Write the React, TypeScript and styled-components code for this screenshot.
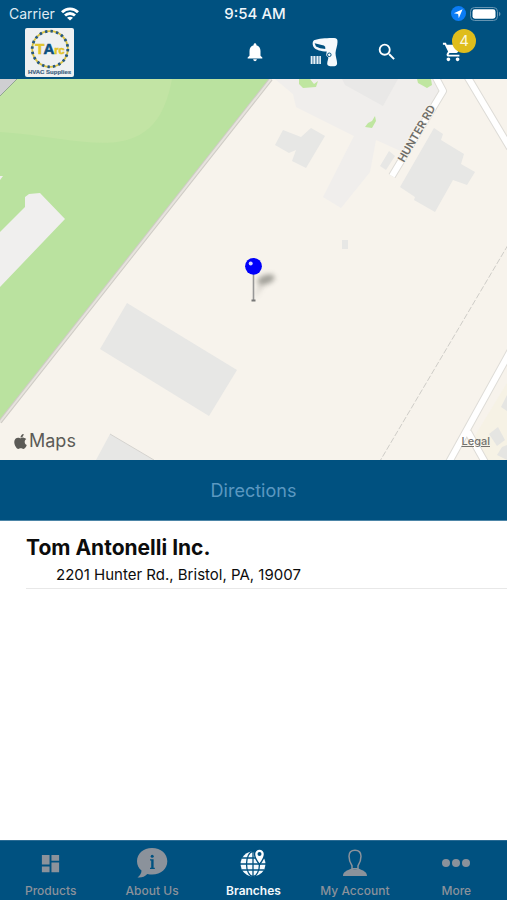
import React from "react";
import styled, { createGlobalStyle } from "styled-components";
import { MdDashboard, MdNotifications, MdSearch, MdShoppingCart } from "react-icons/md";
import { FaApple } from "react-icons/fa";

const blue = "#005180";
const muted = "#8b929b";

const GlobalStyle = createGlobalStyle`
  *, *::before, *::after { box-sizing: border-box; }
  body { margin: 0; background: #fff; font-family: Inter, "Liberation Sans", sans-serif; color: #0c0c0c; }
  button { font: inherit; color: inherit; border: 0; padding: 0; background: none; cursor: pointer; }
  svg { display: block; }
`;

const Screen = styled.div`
  display: flex;
  flex-direction: column;
  min-height: 100vh;
`;

const Header = styled.header`
  background: ${blue};
  color: #fff;
`;

const StatusBar = styled.div`
  display: grid;
  grid-template-columns: 1fr auto 1fr;
  align-items: center;
  height: 27px;
  padding: 0 6px 0 9px;
`;

const StatusGroup = styled.div<{ $end?: boolean }>`
  display: flex;
  align-items: center;
  gap: ${(p) => (p.$end ? 4 : 6)}px;
  justify-content: ${(p) => (p.$end ? "flex-end" : "flex-start")};
  font-size: 14px;
  color: #dfeaf2;
`;

const Clock = styled.time`
  font-size: 15px;
  font-weight: 500;
  color: #f0f6fa;
`;

const TopNav = styled.nav`
  display: flex;
  align-items: flex-start;
  justify-content: space-between;
  height: 52px;
  padding: 0 21px 0 25px;
`;

const Actions = styled.div`
  display: flex;
`;

const ActionButton = styled.button`
  position: relative;
  display: flex;
  align-items: center;
  justify-content: center;
  width: 66px;
  height: 50px;
`;

const Badge = styled.span`
  position: absolute;
  top: 2px;
  right: 10px;
  width: 24px;
  height: 24px;
  border-radius: 50%;
  background: #dfbd1c;
  color: #fbf6dc;
  font-size: 15px;
  line-height: 24px;
  text-align: center;
`;

const MapPanel = styled.section`
  position: relative;
  height: 381px;
  background: #f7f3ec;
  overflow: hidden;
`;

const MapDrawing = styled.svg`
  width: 100%;
  height: 100%;
`;

const MapBrand = styled.div`
  position: absolute;
  left: 12px;
  bottom: 7px;
  display: flex;
  align-items: center;
  color: #5c5b57;
  font-size: 18px;
  line-height: 24px;
`;

const LegalLink = styled.a`
  position: absolute;
  right: 17px;
  bottom: 11px;
  color: #73726e;
  font-size: 11px;
  font-weight: 500;
  line-height: 16px;
`;

const DirectionsButton = styled.button`
  height: 61px;
  && {
    background: ${blue};
    color: #5b98c0;
    font-size: 18px;
    border-bottom: 1px solid #4c85a7;
  }
`;

const BranchList = styled.ul`
  flex: 1;
  margin: 0;
  padding: 0 0 0 26px;
  list-style: none;
`;

const Branch = styled.li`
  display: grid;
  gap: 2px;
  padding: 13px 0 2px;
  border-bottom: 1px solid #e8e8e8;
`;

const BranchName = styled.h2`
  margin: 0;
  font-size: 21px;
  line-height: 28px;
  font-weight: 700;
`;

const BranchAddress = styled.address`
  padding-left: 30px;
  font-size: 15px;
  font-style: normal;
  line-height: 22px;
`;

const TabBar = styled.nav`
  display: grid;
  grid-template-columns: repeat(5, 1fr);
  height: 60px;
  background: ${blue};
  border-top: 1px solid #2a6b94;
`;

const Tab = styled.button<{ $active?: boolean }>`
  display: grid;
  grid-template-rows: 36px 14px;
  gap: 3px;
  align-content: start;
  justify-items: center;
  align-items: center;
  && {
    padding-top: 4px;
    color: ${(p) => (p.$active ? "#f2f8fc" : muted)};
    font-size: 12px;
    line-height: 14px;
    font-weight: ${(p) => (p.$active ? 600 : 500)};
  }
`;

function WifiIcon() {
  return (
    <svg width="18" height="14" viewBox="0 0 18 14" fill="none" stroke="#fff" strokeWidth="2.8">
      <path d="M1 5.200C5.400 .7 12.600 .7 17 5.200" />
      <path d="M4 8.600c2.800-2.800 7.200-2.800 10 0" />
      <path d="M9 13.600 6 10.800c1.800-1.500 4.200-1.500 6 0Z" fill="#fff" stroke="none" />
    </svg>
  );
}

function LocationIcon() {
  return (
    <svg width="15" height="15" viewBox="0 0 15 15">
      <circle cx="7.5" cy="7.5" r="7.5" fill="#0b7cf5" />
      <path d="M11.6 3.3 2.9 7.2l4.2.8.7 4.2Z" fill="#fff" />
    </svg>
  );
}

function BatteryIcon() {
  return (
    <svg width="31" height="14" viewBox="0 0 31 14">
      <rect x=".5" y=".5" width="27" height="13" rx="4" fill="none" stroke="#6695b2" />
      <rect x="2.5" y="2.3" width="23" height="9.4" rx="2.4" fill="#fff" />
      <path d="M29 4.8c2 .8 2 3.6 0 4.4Z" fill="#6695b2" />
    </svg>
  );
}

function Logo() {
  return (
    <svg width="49" height="50" viewBox="0 0 49 50" role="img" aria-label="TAIC HVAC Supplies">
      <rect y="1" width="49" height="49" rx="2" fill="#eef0f1" />
      <circle cx="25" cy="22" r="17.800" fill="none" stroke="#d9c243" strokeWidth="1.800" />
      <circle cx="25" cy="22" r="17.800" fill="none" stroke="#27587f" strokeWidth="2.800" strokeDasharray="2.400 3.190" />
      <g fontFamily="Liberation Sans, sans-serif" fontWeight="700" textAnchor="middle">
        <text x="25" y="27" fontSize="15" fill="#e2c42b" stroke="#e2c42b" strokeWidth=".6">
          T
          <tspan fill="#0b4f80" stroke="#0b4f80">A</tspan>
          <tspan fontSize="11">rc</tspan>
        </text>
        <text x="24.500" y="47" fontSize="6" fill="#3c6181" stroke="#3c6181" strokeWidth=".2">HVAC Supplies</text>
      </g>
    </svg>
  );
}

function ScannerIcon() {
  return (
    <svg width="34" height="32" viewBox="0 0 34 32">
      <path
        d="M10 4.200C15 2.400 24 1.800 30 2c2.600 0 3.700 1 3.500 4 0 4-1.700 7-2 11 0 4 1.700 7 1.600 10.500 0 2-1.600 2.800-4.600 2.800-3.500 0-5.300-.6-5.300-2.600 0-2.700 1.500-4.700 1-6.700-1.700-.2-2.400-1.800-1.700-4l.2-1.400C17 15.400 12 14 10 11.500 8.500 9.500 8 5.600 10 4.200Z"
        fill="#f5f9fc"
      />
      <path d="M10.600 7.200 19.800 9.600Q21.800 10.400 21.300 13 15.500 12.800 12 10.600Z" fill={blue} />
      <circle cx="25.300" cy="18.800" r="1.800" fill="none" stroke={blue} />
      <path d="M6.700 20h10v8h-10Z" fill="#6d9ab7" />
      <path d="M7.500 20v8M10.300 20v8M13.500 20v8M16.200 20v8" stroke="#eaf2f7" strokeWidth="1.400" />
    </svg>
  );
}

function AboutIcon() {
  return (
    <svg width="32" height="32" viewBox="0 0 32 32">
      <path d="M16 1C7.200 1 1 6.700 1 14.200c0 4 1.700 7 4.500 9.200 0 2.800-1.500 5-4 7 4 .5 7.300-.8 9.800-3.500 11.300 2.400 20-3.600 20-12.700C31.300 6.700 25 1 16 1Z" fill={muted} />
      <circle cx="16.200" cy="9.300" r="1.500" fill={blue} />
      <path d="M14 12.300h3.600v8.500h1.200v1.200H14v-1.200h1.200v-7.300H14Z" fill={blue} />
    </svg>
  );
}

function BranchesIcon() {
  return (
    <svg width="26" height="30" viewBox="0 0 26 30">
      <circle cx="13" cy="16" r="12.400" fill="#f5fafd" />
      <g fill="none" stroke={blue} strokeWidth="1.300">
        <path d="M13 3v26M0 16h26M2 10h22M2 22h22" />
        <ellipse cx="13" cy="16" rx="6.500" ry="12.400" />
      </g>
      <path d="M19.500 1a5 5 0 0 0-5 5C14.500 10 19.500 16.500 19.500 16.500S24.500 10 24.500 6A5 5 0 0 0 19.500 1Z" fill="#fff" stroke={blue} strokeWidth="1.400" />
      <circle cx="19.500" cy="6" r="2" fill={blue} />
    </svg>
  );
}

function AccountIcon() {
  return (
    <svg width="26" height="30" viewBox="0 0 26 30" fill={muted}>
      <path d="M13 2.300c-4 0-6 2.400-6 6 0 4 1.300 7 3 9.400v3h6v-3c1.700-2.400 3-5.400 3-9.400 0-3.600-2-6-6-6Z" fill="none" stroke={muted} strokeWidth="1.500" />
      <path d="M1 28c0-4.200 4-5.600 8.500-7.500q3.500 2 7 0C21 22.400 25 23.800 25 28Z" />
    </svg>
  );
}

function MoreIcon() {
  return (
    <svg width="28" height="8" viewBox="0 0 28 8" fill={muted}>
      <circle cx="4" cy="4" r="4" />
      <circle cx="14" cy="4" r="4" />
      <circle cx="24" cy="4" r="4" />
    </svg>
  );
}

function BranchMap() {
  return (
    <MapDrawing viewBox="0 79 507 381" preserveAspectRatio="xMidYMid slice" role="img" aria-label="Map of Hunter Rd">
      <defs>
        <filter id="soft" x="-50%" y="-50%" width="200%" height="200%">
          <feGaussianBlur stdDeviation="2.500" />
        </filter>
      </defs>
      <path d="M0 79H271L0 422Z" fill="#bae29f" />
      <path d="M0 79H172C167 106 157 128 135 137 104 151 60 136 0 132Z" fill="#c2e4a4" />
      <path d="M0 79H17L0 96Z" fill="#cfcfd2" />
      <path d="M17 79 0 96" stroke="#91a592" />
      <path d="M0 232 25 207V197L29 194 40 193 65 219 0 287ZM0 176h3l-3 4Z" fill="#f0efee" />
      <path d="M271 79 0 422" stroke="#cfcbc5" strokeWidth="4" />
      <path d="M271 79 0 422" stroke="#e6e3dd" strokeWidth="2" />

      <path d="M275 79H434L440 95 405 153 376 140 370 172 341 208 323 197 354 136 296 107 293 94Z" fill="#f0eeec" />
      <path d="M342 79H398L383 106 345 85Z" fill="#e9e8e7" />
      <g fill="#bfe6a0">
        <path d="M299 79h11l4 5 4-3-2 6-13 1-4-4Z" />
        <path d="M417 79h14l1 6-5 3-9-5ZM375 116l1 5-4 7-7-1 3-4 4-2Z" />
      </g>
      <g fill="#e7e7e5">
        <path d="M283 130 301 137 311 128 325 136 306 168 292 161 296 150 289 153 275 145Z" />
        <path d="M389 151 395 156 386 170 380 166Z" />
        <path d="M434 128 443 134 441 140 464 154 461 164 475 172 467 185 453 180 435 212 414 200 415 197 400 187Z" />
        <path d="M342 240h6v9h-6Z" />
        <path d="M127 303 237 370 209 416 100 349Z" />
        <path d="M110 434 154 460H96Z" />
      </g>
      <path d="M110 434 154 460" stroke="#d5d3cf" />

      <path d="M507 383 470 444 480 460H507Z" fill="#f6f2e5" />
      <g fill="#e5e5e2">
        <path d="M507 395 501 407 507 411Z" />
        <path d="M489 434 498 427 505 440 497 446Z" />
        <path d="M497 455 502 447 507 445V460Z" />
      </g>
      <g fill="none" strokeLinejoin="round">
        <g stroke="#dedcd7" strokeWidth="8">
          <path d="M434 74 443 91 392 176M467 76 510 148M511 350 448 464M468 432 486 464" />
        </g>
        <g stroke="#fff" strokeWidth="6">
          <path d="M434 74 443 91 392 176M467 76 510 148M511 350 448 464M468 432 486 464" />
        </g>
        <path d="M508 245 380 461" stroke="#cfcdc8" strokeDasharray="6 2" />
      </g>
      <text
        transform="translate(404 163) rotate(-60)"
        fontFamily="Inter, sans-serif"
        fontSize="11"
        fontWeight="600"
        fill="#6e6d69"
        stroke="#f7f3ec"
        strokeWidth="2"
        paintOrder="stroke"
      >
        HUNTER RD
      </text>

      <path d="M254 299 259 284 265 284 263 287Z" fill="#77756f" opacity=".25" filter="url(#soft)" />
      <ellipse cx="266" cy="279.500" rx="9" ry="4.500" transform="rotate(-18 266 279.500)" fill="#6b6a64" opacity=".6" filter="url(#soft)" />
      <path d="M253.500 273V301" stroke="#979797" strokeWidth="1.600" />
      <path d="M251.500 300.500h4" stroke="#777" strokeWidth="2" />
      <circle cx="253.500" cy="266.300" r="8.400" fill="#0000fa" />
      <circle cx="250.700" cy="263.500" r="2" fill="#d5d8ff" />
    </MapDrawing>
  );
}

const tabs = [
  { label: "Products", icon: <MdDashboard size={23} /> },
  { label: "About Us", icon: <AboutIcon /> },
  { label: "Branches", icon: <BranchesIcon />, active: true },
  { label: "My Account", icon: <AccountIcon /> },
  { label: "More", icon: <MoreIcon /> },
];

export default function App() {
  return (
    <Screen>
      <GlobalStyle />
      <Header>
        <StatusBar>
          <StatusGroup>
            Carrier
            <WifiIcon />
          </StatusGroup>
          <Clock>9:54 AM</Clock>
          <StatusGroup $end>
            <LocationIcon />
            <BatteryIcon />
          </StatusGroup>
        </StatusBar>
        <TopNav>
          <Logo />
          <Actions>
            <ActionButton aria-label="Notifications">
              <MdNotifications size={22} />
            </ActionButton>
            <ActionButton aria-label="Scan barcode">
              <ScannerIcon />
            </ActionButton>
            <ActionButton aria-label="Search">
              <MdSearch size={22} />
            </ActionButton>
            <ActionButton aria-label="Cart">
              <MdShoppingCart size={22} />
              <Badge>4</Badge>
            </ActionButton>
          </Actions>
        </TopNav>
      </Header>
      <MapPanel>
        <BranchMap />
        <MapBrand>
          <FaApple size={17} />
          Maps
        </MapBrand>
        <LegalLink href="#legal">Legal</LegalLink>
      </MapPanel>
      <DirectionsButton>Directions</DirectionsButton>
      <BranchList>
        <Branch>
          <BranchName>Tom Antonelli Inc.</BranchName>
          <BranchAddress>2201 Hunter Rd., Bristol, PA, 19007</BranchAddress>
        </Branch>
      </BranchList>
      <TabBar>
        {tabs.map((tab) => (
          <Tab key={tab.label} $active={tab.active} aria-current={tab.active ? "page" : undefined}>
            {tab.icon}
            {tab.label}
          </Tab>
        ))}
      </TabBar>
    </Screen>
  );
}
